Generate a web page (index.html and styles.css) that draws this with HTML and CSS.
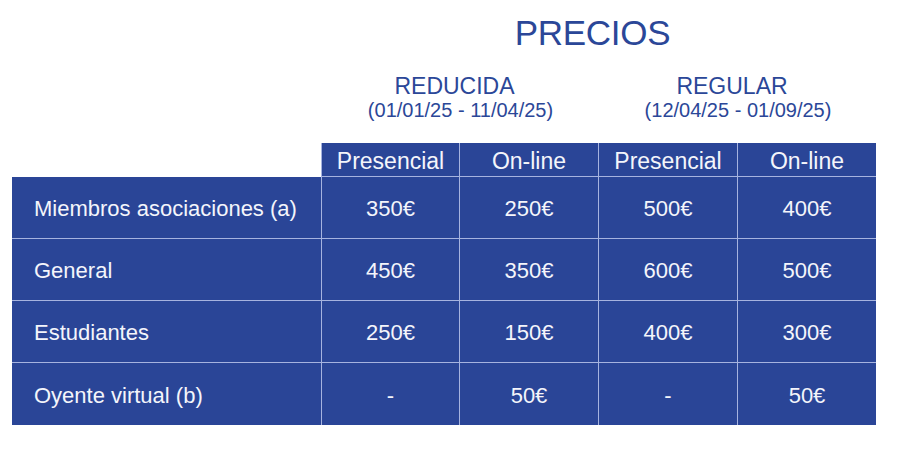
FILE: index.html
```html
<!DOCTYPE html>
<html lang="es">
<head>
<meta charset="utf-8">
<title>Precios</title>
<link rel="stylesheet" href="styles.css">
</head>
<body>
<div class="page">
  <div class="heads">
    <div class="spacer"></div>
    <div class="titles">
      <h1 class="title">PRECIOS</h1>
      <div class="periods">
        <div class="period">
          <div class="period-name">REDUCIDA</div>
          <div class="period-dates">(01/01/25 - 11/04/25)</div>
        </div>
        <div class="period">
          <div class="period-name">REGULAR</div>
          <div class="period-dates">(12/04/25 - 01/09/25)</div>
        </div>
      </div>
    </div>
  </div>
  <div class="table">
    <div class="cell blank"></div>
    <div class="cell th">Presencial</div>
    <div class="cell th">On-line</div>
    <div class="cell th">Presencial</div>
    <div class="cell th">On-line</div>

    <div class="cell label">Miembros asociaciones (a)</div>
    <div class="cell val">350€</div>
    <div class="cell val">250€</div>
    <div class="cell val">500€</div>
    <div class="cell val">400€</div>

    <div class="cell label">General</div>
    <div class="cell val">450€</div>
    <div class="cell val">350€</div>
    <div class="cell val">600€</div>
    <div class="cell val">500€</div>

    <div class="cell label">Estudiantes</div>
    <div class="cell val">250€</div>
    <div class="cell val">150€</div>
    <div class="cell val">400€</div>
    <div class="cell val">300€</div>

    <div class="cell label last">Oyente virtual (b)</div>
    <div class="cell val last">-</div>
    <div class="cell val last">50€</div>
    <div class="cell val last">-</div>
    <div class="cell val last">50€</div>
  </div>
</div>
</body>
</html>
```
FILE: styles.css
```css
* { box-sizing: border-box; }
html, body { margin: 0; padding: 0; background: #ffffff; }
body {
  font-family: "Liberation Sans", Arial, sans-serif;
  color: #2b4798;
}
.page {
  width: 900px;
  padding: 0 0 0 12px;
}
.heads {
  display: grid;
  grid-template-columns: 309px 555px;
}
.titles {
  display: flex;
  flex-direction: column;
  align-items: center;
}
.title {
  margin: 0;
  padding-top: 13px;
  padding-right: 12px;
  font-weight: normal;
  font-size: 35px;
  line-height: 40px;
  height: 73px;
  letter-spacing: -0.3px;
}
.periods {
  display: grid;
  grid-template-columns: 277px 278px;
  width: 100%;
}
.period {
  display: flex;
  flex-direction: column;
  align-items: center;
}
.period-name {
  font-size: 23px;
  line-height: 26px;
  padding-right: 10px;
}
.period-dates {
  font-size: 20px;
  line-height: 22px;
  padding-left: 2px;
}
.table {
  margin-top: 22px;
  display: grid;
  grid-template-columns: 309px 138px 139px 139px 139px;
  grid-template-rows: 34px 62px 62px 62px 62px;
  width: 864px;
}
.cell {
  display: flex;
  align-items: center;
  padding-top: 3px;
  background: #2a4597;
  color: #f4f5fb;
  font-size: 22px;
  border-left: 1px solid #a6b3df;
  border-bottom: 1px solid #a6b3df;
}
.cell.blank {
  background: transparent;
  border: none;
}
.cell.th {
  justify-content: center;
  font-size: 23px;
}
.cell.label {
  border-left: none;
  padding-left: 22px;
}
.cell.val {
  justify-content: center;
}
.cell.last {
  border-bottom: none;
}
```
